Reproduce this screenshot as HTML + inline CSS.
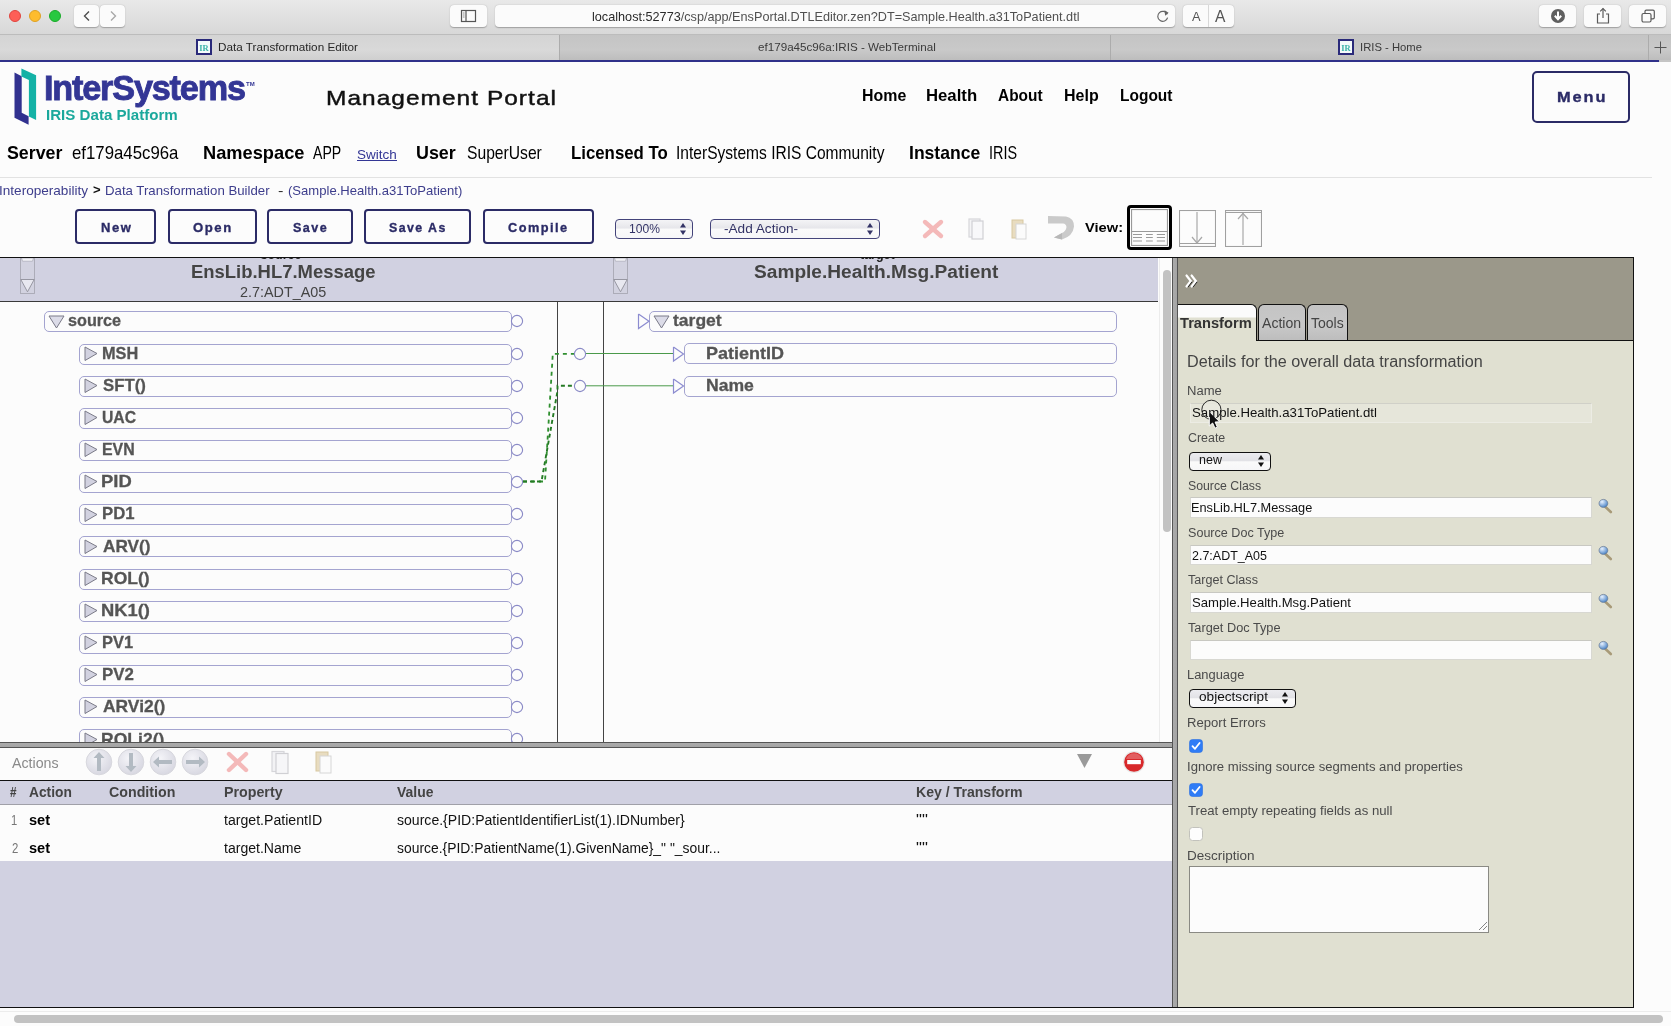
<!DOCTYPE html>
<html><head><meta charset="utf-8"><title>Data Transformation Editor</title>
<style>
html,body{margin:0;padding:0;width:1671px;height:1026px;overflow:hidden;background:#fcfcfc;font-family:'Liberation Sans',sans-serif}
</style></head><body>
<div style="position:relative;width:1671px;height:1026px;overflow:hidden;will-change:transform">
<div style="position:absolute;left:0px;top:0px;width:1671px;height:34px;background:linear-gradient(#e9e9e9,#d8d8d8)"></div>
<div style="position:absolute;left:0px;top:34px;width:1671px;height:1px;background:#bcbcbc"></div>
<div style="position:absolute;left:9px;top:10px;width:12px;height:12px;border-radius:50%;background:#fe5f57;box-sizing:border-box;border:0.5px solid #e0443e"></div>
<div style="position:absolute;left:29px;top:10px;width:12px;height:12px;border-radius:50%;background:#febc2e;box-sizing:border-box;border:0.5px solid #dea123"></div>
<div style="position:absolute;left:49px;top:10px;width:12px;height:12px;border-radius:50%;background:#28c840;box-sizing:border-box;border:0.5px solid #1aab29"></div>
<div style="position:absolute;left:74px;top:5px;width:25px;height:22px;background:#fbfbfb;border-radius:4px;box-shadow:0 0.5px 1.2px rgba(0,0,0,0.28)"></div>
<div style="position:absolute;left:100px;top:5px;width:25px;height:22px;background:#fbfbfb;border-radius:4px;box-shadow:0 0.5px 1.2px rgba(0,0,0,0.28)"></div>
<svg style="position:absolute;left:82px;top:10px;" width="10" height="12" viewBox="0 0 10 12"><polyline points="7,1.5 2.5,6 7,10.5" fill="none" stroke="#4d4d4d" stroke-width="1.4"/></svg>
<svg style="position:absolute;left:108px;top:10px;" width="10" height="12" viewBox="0 0 10 12"><polyline points="3,1.5 7.5,6 3,10.5" fill="none" stroke="#a8a8a8" stroke-width="1.4"/></svg>
<div style="position:absolute;left:450px;top:5px;width:37px;height:22px;background:#fbfbfb;border-radius:4px;box-shadow:0 0.5px 1.2px rgba(0,0,0,0.28)"></div>
<svg style="position:absolute;left:460px;top:9px;" width="18" height="14" viewBox="0 0 18 14"><rect x="1.5" y="1.5" width="14" height="11" fill="none" stroke="#555" stroke-width="1.2"/><line x1="6" y1="1.5" x2="6" y2="12.5" stroke="#555" stroke-width="1.2"/><line x1="2.8" y1="4" x2="4.6" y2="4" stroke="#777" stroke-width="0.8"/><line x1="2.8" y1="6" x2="4.6" y2="6" stroke="#777" stroke-width="0.8"/><line x1="2.8" y1="8" x2="4.6" y2="8" stroke="#777" stroke-width="0.8"/></svg>
<div style="position:absolute;left:495px;top:5px;width:680px;height:22px;background:#fbfbfb;border-radius:4px;box-shadow:0 0.5px 1.2px rgba(0,0,0,0.28)"></div>
<svg style="position:absolute;left:1156px;top:9px;" width="14" height="14" viewBox="0 0 14 14"><path d="M11.3,5.2 A5,5 0 1 0 11.6,8.6" fill="none" stroke="#666" stroke-width="1.2"/><polygon points="8.5,1.2 12.6,3.8 9.2,6.8" fill="#666"/></svg>
<div style="position:absolute;left:1183px;top:5px;width:51px;height:22px;background:#fbfbfb;border-radius:4px;box-shadow:0 0.5px 1.2px rgba(0,0,0,0.28)"></div>
<div style="position:absolute;left:1208px;top:5px;width:1px;height:22px;background:#d8d8d8"></div>
<div style="position:absolute;left:1539px;top:5px;width:37px;height:22px;background:#fbfbfb;border-radius:4px;box-shadow:0 0.5px 1.2px rgba(0,0,0,0.28)"></div>
<div style="position:absolute;left:1584px;top:5px;width:37px;height:22px;background:#fbfbfb;border-radius:4px;box-shadow:0 0.5px 1.2px rgba(0,0,0,0.28)"></div>
<div style="position:absolute;left:1629px;top:5px;width:37px;height:22px;background:#fbfbfb;border-radius:4px;box-shadow:0 0.5px 1.2px rgba(0,0,0,0.28)"></div>
<svg style="position:absolute;left:1550px;top:8px;" width="16" height="16" viewBox="0 0 16 16"><circle cx="8" cy="8" r="7" fill="#5f5f5f"/><line x1="8" y1="3.6" x2="8" y2="10" stroke="#fff" stroke-width="2"/><polyline points="4.8,7.8 8,11.2 11.2,7.8" fill="none" stroke="#fff" stroke-width="2"/></svg>
<svg style="position:absolute;left:1595px;top:7px;" width="16" height="18" viewBox="0 0 16 18"><polyline points="5,7 2.5,7 2.5,16 13.5,16 13.5,7 11,7" fill="none" stroke="#5a5a5a" stroke-width="1.2"/><line x1="8" y1="1.5" x2="8" y2="11" stroke="#5a5a5a" stroke-width="1.2"/><polyline points="5.2,4.3 8,1.5 10.8,4.3" fill="none" stroke="#5a5a5a" stroke-width="1.2"/></svg>
<svg style="position:absolute;left:1640px;top:9px;" width="16" height="14" viewBox="0 0 16 14"><rect x="2" y="4.5" width="9" height="8.5" rx="1.5" fill="none" stroke="#5a5a5a" stroke-width="1.2"/><path d="M5,4.5 V2.5 Q5,1.2 6.3,1.2 H13 Q14.3,1.2 14.3,2.5 V8.5 Q14.3,9.8 13,9.8 H11" fill="none" stroke="#5a5a5a" stroke-width="1.2"/></svg>
<div style="position:absolute;left:0px;top:35px;width:1671px;height:25px;background:linear-gradient(#c4c4c4,#c9c9c9 60%,#bdbdbd)"></div>
<div style="position:absolute;left:0px;top:35px;width:559px;height:25px;background:linear-gradient(#d4d4d4,#d9d9d9 60%,#cfcfcf)"></div>
<div style="position:absolute;left:559px;top:35px;width:1px;height:25px;background:#acacac"></div>
<div style="position:absolute;left:1110px;top:35px;width:1px;height:25px;background:#acacac"></div>
<div style="position:absolute;left:1648px;top:35px;width:1px;height:25px;background:#acacac"></div>
<svg style="position:absolute;left:1654px;top:41px;" width="13" height="13" viewBox="0 0 13 13"><line x1="6.5" y1="0.5" x2="6.5" y2="12.5" stroke="#555" stroke-width="1"/><line x1="0.5" y1="6.5" x2="12.5" y2="6.5" stroke="#555" stroke-width="1"/></svg>
<svg style="position:absolute;left:196px;top:39px;" width="16" height="16" viewBox="0 0 16 16"><rect x="1" y="1" width="14" height="14" fill="#f4fbfb" stroke="#2a2a7a" stroke-width="2"/><text x="8" y="11.6" font-family="Liberation Serif" font-size="8.5" font-weight="bold" fill="#3bb3a8" text-anchor="middle">IR</text></svg>
<svg style="position:absolute;left:1338px;top:39px;" width="16" height="16" viewBox="0 0 16 16"><rect x="1" y="1" width="14" height="14" fill="#f4fbfb" stroke="#2a2a7a" stroke-width="2"/><text x="8" y="11.6" font-family="Liberation Serif" font-size="8.5" font-weight="bold" fill="#3bb3a8" text-anchor="middle">IR</text></svg>
<div style="position:absolute;left:0px;top:60px;width:1659px;height:2px;background:#30318a"></div>
<div style="position:absolute;left:1659px;top:60px;width:12px;height:2px;background:#c4c4c4"></div>
<div style="position:absolute;left:0px;top:62px;width:1671px;height:964px;background:#fcfcfc"></div>
<svg style="position:absolute;left:10px;top:64px;" width="32" height="64" viewBox="0 0 32 64"><polygon points="4.5,8.4 11.7,12.2 11.7,48.7 18.6,52.2 18.6,60.8 4.5,53.7" fill="#31318f"/><polygon points="11.4,4.4 26.1,11.2 26.1,55.9 18.9,52.6 18.9,15.9 11.4,12.4" fill="#14b2a6"/></svg>
<div style="position:absolute;left:246px;top:81px;font-family:'Liberation Sans';font-size:6px;font-weight:bold;color:#333695;line-height:6px">TM</div>
<div style="position:absolute;left:1532px;top:71px;width:98px;height:52px;box-sizing:border-box;border:2px solid #2b2b66;border-radius:5px"></div>
<div style="position:absolute;left:0px;top:177px;width:1652px;height:1px;background:#e2e2e2"></div>
<div style="position:absolute;left:357px;top:160px;width:39.5px;height:1px;background:#333695"></div>
<div style="position:absolute;left:75px;top:209.3px;width:81px;height:35px;box-sizing:border-box;border:2px solid #2b2b66;border-radius:4px;background:#fcfcfc"></div>
<div style="position:absolute;left:168px;top:209.3px;width:89px;height:35px;box-sizing:border-box;border:2px solid #2b2b66;border-radius:4px;background:#fcfcfc"></div>
<div style="position:absolute;left:267px;top:209.3px;width:86px;height:35px;box-sizing:border-box;border:2px solid #2b2b66;border-radius:4px;background:#fcfcfc"></div>
<div style="position:absolute;left:364px;top:209.3px;width:107px;height:35px;box-sizing:border-box;border:2px solid #2b2b66;border-radius:4px;background:#fcfcfc"></div>
<div style="position:absolute;left:483px;top:209.3px;width:111px;height:35px;box-sizing:border-box;border:2px solid #2b2b66;border-radius:4px;background:#fcfcfc"></div>
<div style="position:absolute;left:615px;top:219px;width:78px;height:20px;box-sizing:border-box;border:1px solid #44447a;border-radius:4px;background:linear-gradient(#f4f4f6,#e6e6ea 45%,#fafafa 50%,#f6f6f8)"></div>
<div style="position:absolute;left:710px;top:219px;width:170px;height:20px;box-sizing:border-box;border:1px solid #44447a;border-radius:4px;background:linear-gradient(#f4f4f6,#e6e6ea 45%,#fafafa 50%,#f6f6f8)"></div>
<svg style="position:absolute;left:678.5px;top:222px;" width="8" height="14" viewBox="0 0 8 14"><polygon points="4,1 7,5.5 1,5.5" fill="#333366"/><polygon points="4,13 7,8.5 1,8.5" fill="#333366"/></svg>
<svg style="position:absolute;left:865.5px;top:222px;" width="8" height="14" viewBox="0 0 8 14"><polygon points="4,1 7,5.5 1,5.5" fill="#333366"/><polygon points="4,13 7,8.5 1,8.5" fill="#333366"/></svg>
<svg style="position:absolute;left:921px;top:218px;" width="24" height="22" viewBox="0 0 24 22"><line x1="4" y1="4" x2="20" y2="18" stroke="#f4b9b9" stroke-width="4.4" stroke-linecap="round"/><line x1="20" y1="4" x2="4" y2="18" stroke="#f4b9b9" stroke-width="4.4" stroke-linecap="round"/></svg>
<svg style="position:absolute;left:966px;top:217px;" width="20" height="24" viewBox="0 0 20 24"><rect x="3" y="2" width="11" height="18" fill="#f4f4f6" stroke="#d6d6da" stroke-width="1.2"/><rect x="6" y="4" width="11" height="18" fill="#f8f8fa" stroke="#d0d0d4" stroke-width="1.2"/></svg>
<svg style="position:absolute;left:1010px;top:217px;" width="20" height="24" viewBox="0 0 20 24"><rect x="2" y="3" width="11" height="18" fill="#e8dcc0" stroke="#d8c8a0" stroke-width="1"/><rect x="6" y="7" width="10" height="15" fill="#fbfbfb" stroke="#d6d6d6" stroke-width="1"/></svg>
<svg style="position:absolute;left:1040px;top:210px;" width="40" height="35" viewBox="0 0 40 35"><path d="M8,6 L26,6.5 Q34,8 34,16.5 Q33,26 22,29.5 L14,27.5 L22,23 Q26,21 26.5,17 Q26,13.5 23,13.5 L8,13.5 Z" fill="#cacaca"/><path d="M14,27.5 L22,23 L22,29.5 Z" fill="#b8b8b8"/></svg>
<div style="position:absolute;left:1127px;top:205px;width:45px;height:45px;box-sizing:border-box;border:3px solid #000;border-radius:4px;background:#fcfcfc"></div>
<svg style="position:absolute;left:1131px;top:209px;" width="37" height="37" viewBox="0 0 37 37"><rect x="0.5" y="0.5" width="36" height="36" fill="none" stroke="#999" stroke-width="1.2"/><line x1="0.5" y1="22.5" x2="36.5" y2="22.5" stroke="#999" stroke-width="1.2"/><line x1="2" y1="25.5" x2="11" y2="25.5" stroke="#999" stroke-width="1"/><line x1="15" y1="25.5" x2="21.8" y2="25.5" stroke="#999" stroke-width="1"/><line x1="25.8" y1="25.5" x2="34" y2="25.5" stroke="#999" stroke-width="1"/><line x1="2" y1="28.5" x2="11" y2="28.5" stroke="#999" stroke-width="1"/><line x1="15" y1="28.5" x2="21.8" y2="28.5" stroke="#999" stroke-width="1"/><line x1="25.8" y1="28.5" x2="34" y2="28.5" stroke="#999" stroke-width="1"/><line x1="2" y1="32" x2="11" y2="32" stroke="#999" stroke-width="1"/><line x1="15" y1="32" x2="21.8" y2="32" stroke="#999" stroke-width="1"/><line x1="25.8" y1="32" x2="34" y2="32" stroke="#999" stroke-width="1"/></svg>
<svg style="position:absolute;left:1179px;top:210px;" width="37" height="37" viewBox="0 0 37 37"><rect x="0.5" y="0.5" width="36" height="36" fill="none" stroke="#a0a0a0" stroke-width="1.1"/><line x1="0.5" y1="33.5" x2="36.5" y2="33.5" stroke="#a0a0a0" stroke-width="1.1"/><line x1="18" y1="2" x2="18" y2="33" stroke="#a8a8a8" stroke-width="1.2"/><polyline points="13,27 18,33 23,27" fill="none" stroke="#a8a8a8" stroke-width="1.2"/></svg>
<svg style="position:absolute;left:1225px;top:210px;" width="37" height="37" viewBox="0 0 37 37"><rect x="0.5" y="0.5" width="36" height="36" fill="none" stroke="#a0a0a0" stroke-width="1.1"/><line x1="0.5" y1="2.5" x2="36.5" y2="2.5" stroke="#a0a0a0" stroke-width="1.1"/><line x1="18" y1="3" x2="18" y2="35" stroke="#a8a8a8" stroke-width="1.2"/><polyline points="13,9 18,3.5 23,9" fill="none" stroke="#a8a8a8" stroke-width="1.2"/></svg>
<div style="position:absolute;left:0px;top:257px;width:1634px;height:1px;background:#111"></div>
<div style="position:absolute;left:0px;top:258px;width:1158px;height:43px;background:#d1d1e1"></div>
<div style="position:absolute;left:0px;top:301px;width:1158px;height:1px;background:#3a3a3a"></div>
<div style="position:absolute;left:0px;top:302px;width:1172px;height:440px;background:#fcfcfc"></div>
<div style="position:absolute;left:1158px;top:258px;width:14px;height:44px;background:#fcfcfc"></div>
<div style="position:absolute;left:1159px;top:258px;width:1px;height:484px;background:#ececec"></div>
<div style="position:absolute;left:1163px;top:270px;width:8px;height:262px;background:#c2c2c2;border-radius:4px"></div>
<svg style="position:absolute;left:20px;top:258px;" width="15" height="36" viewBox="0 0 15 36"><rect x="0.5" y="0.5" width="14" height="35" fill="#d2d2e0" stroke="#a8a8b4" stroke-width="0.9"/><path d="M1.5,0 H13.5 L12.5,3.2 H2.5 Z" fill="#f2f2f6" stroke="#a8a8b4" stroke-width="0.7"/><polygon points="0.8,21.5 14.2,21.5 7.5,33.8" fill="#e8e8f0" stroke="#8e8e9a" stroke-width="0.9"/></svg>
<svg style="position:absolute;left:613px;top:258px;" width="15" height="36" viewBox="0 0 15 36"><rect x="0.5" y="0.5" width="14" height="35" fill="#d2d2e0" stroke="#a8a8b4" stroke-width="0.9"/><path d="M1.5,0 H13.5 L12.5,3.2 H2.5 Z" fill="#f2f2f6" stroke="#a8a8b4" stroke-width="0.7"/><polygon points="0.8,21.5 14.2,21.5 7.5,33.8" fill="#e8e8f0" stroke="#8e8e9a" stroke-width="0.9"/></svg>
<div style="position:absolute;left:557px;top:302px;width:1px;height:440px;background:#444"></div>
<div style="position:absolute;left:603px;top:302px;width:1px;height:440px;background:#444"></div>
<div style="position:absolute;left:44px;top:311px;width:468px;height:21px;box-sizing:border-box;border:1.2px solid #a4a4d0;border-radius:5px;background:#fcfcfc"></div>
<svg style="position:absolute;left:47.5px;top:314.5px;" width="17" height="14" viewBox="0 0 17 14"><polygon points="1,1 16,1 8.5,13" fill="#dcdce8" stroke="#7a7a88" stroke-width="1"/></svg>
<svg style="position:absolute;left:510px;top:314.3px;" width="14" height="14" viewBox="0 0 14 14"><circle cx="7" cy="7" r="5.6" fill="#fcfcfc" stroke="#8a8ac6" stroke-width="1.15"/></svg>
<div style="position:absolute;left:78.5px;top:343.5px;width:433.5px;height:21px;box-sizing:border-box;border:1.2px solid #a4a4d0;border-radius:5px;background:#fcfcfc"></div>
<svg style="position:absolute;left:83.5px;top:345.8px;" width="14" height="16" viewBox="0 0 14 16"><polygon points="1,1 13,7.5 1,14.5" fill="#d2d2e0" stroke="#7a7a88" stroke-width="1"/></svg>
<svg style="position:absolute;left:510px;top:346.5px;" width="14" height="14" viewBox="0 0 14 14"><circle cx="7" cy="7" r="5.6" fill="#fcfcfc" stroke="#8a8ac6" stroke-width="1.15"/></svg>
<div style="position:absolute;left:78.5px;top:375.5px;width:433.5px;height:21px;box-sizing:border-box;border:1.2px solid #a4a4d0;border-radius:5px;background:#fcfcfc"></div>
<svg style="position:absolute;left:83.5px;top:377.95px;" width="14" height="16" viewBox="0 0 14 16"><polygon points="1,1 13,7.5 1,14.5" fill="#d2d2e0" stroke="#7a7a88" stroke-width="1"/></svg>
<svg style="position:absolute;left:510px;top:378.65px;" width="14" height="14" viewBox="0 0 14 14"><circle cx="7" cy="7" r="5.6" fill="#fcfcfc" stroke="#8a8ac6" stroke-width="1.15"/></svg>
<div style="position:absolute;left:78.5px;top:407.5px;width:433.5px;height:21px;box-sizing:border-box;border:1.2px solid #a4a4d0;border-radius:5px;background:#fcfcfc"></div>
<svg style="position:absolute;left:83.5px;top:410.1px;" width="14" height="16" viewBox="0 0 14 16"><polygon points="1,1 13,7.5 1,14.5" fill="#d2d2e0" stroke="#7a7a88" stroke-width="1"/></svg>
<svg style="position:absolute;left:510px;top:410.8px;" width="14" height="14" viewBox="0 0 14 14"><circle cx="7" cy="7" r="5.6" fill="#fcfcfc" stroke="#8a8ac6" stroke-width="1.15"/></svg>
<div style="position:absolute;left:78.5px;top:440.0px;width:433.5px;height:21px;box-sizing:border-box;border:1.2px solid #a4a4d0;border-radius:5px;background:#fcfcfc"></div>
<svg style="position:absolute;left:83.5px;top:442.25px;" width="14" height="16" viewBox="0 0 14 16"><polygon points="1,1 13,7.5 1,14.5" fill="#d2d2e0" stroke="#7a7a88" stroke-width="1"/></svg>
<svg style="position:absolute;left:510px;top:442.95px;" width="14" height="14" viewBox="0 0 14 14"><circle cx="7" cy="7" r="5.6" fill="#fcfcfc" stroke="#8a8ac6" stroke-width="1.15"/></svg>
<div style="position:absolute;left:78.5px;top:472.0px;width:433.5px;height:21px;box-sizing:border-box;border:1.2px solid #a4a4d0;border-radius:5px;background:#fcfcfc"></div>
<svg style="position:absolute;left:83.5px;top:474.4px;" width="14" height="16" viewBox="0 0 14 16"><polygon points="1,1 13,7.5 1,14.5" fill="#d2d2e0" stroke="#7a7a88" stroke-width="1"/></svg>
<svg style="position:absolute;left:510px;top:475.09999999999997px;" width="14" height="14" viewBox="0 0 14 14"><circle cx="7" cy="7" r="5.6" fill="#fcfcfc" stroke="#8a8ac6" stroke-width="1.15"/></svg>
<div style="position:absolute;left:78.5px;top:504.0px;width:433.5px;height:21px;box-sizing:border-box;border:1.2px solid #a4a4d0;border-radius:5px;background:#fcfcfc"></div>
<svg style="position:absolute;left:83.5px;top:506.55px;" width="14" height="16" viewBox="0 0 14 16"><polygon points="1,1 13,7.5 1,14.5" fill="#d2d2e0" stroke="#7a7a88" stroke-width="1"/></svg>
<svg style="position:absolute;left:510px;top:507.25px;" width="14" height="14" viewBox="0 0 14 14"><circle cx="7" cy="7" r="5.6" fill="#fcfcfc" stroke="#8a8ac6" stroke-width="1.15"/></svg>
<div style="position:absolute;left:78.5px;top:536.0px;width:433.5px;height:21px;box-sizing:border-box;border:1.2px solid #a4a4d0;border-radius:5px;background:#fcfcfc"></div>
<svg style="position:absolute;left:83.5px;top:538.7px;" width="14" height="16" viewBox="0 0 14 16"><polygon points="1,1 13,7.5 1,14.5" fill="#d2d2e0" stroke="#7a7a88" stroke-width="1"/></svg>
<svg style="position:absolute;left:510px;top:539.4000000000001px;" width="14" height="14" viewBox="0 0 14 14"><circle cx="7" cy="7" r="5.6" fill="#fcfcfc" stroke="#8a8ac6" stroke-width="1.15"/></svg>
<div style="position:absolute;left:78.5px;top:568.5px;width:433.5px;height:21px;box-sizing:border-box;border:1.2px solid #a4a4d0;border-radius:5px;background:#fcfcfc"></div>
<svg style="position:absolute;left:83.5px;top:570.85px;" width="14" height="16" viewBox="0 0 14 16"><polygon points="1,1 13,7.5 1,14.5" fill="#d2d2e0" stroke="#7a7a88" stroke-width="1"/></svg>
<svg style="position:absolute;left:510px;top:571.5500000000001px;" width="14" height="14" viewBox="0 0 14 14"><circle cx="7" cy="7" r="5.6" fill="#fcfcfc" stroke="#8a8ac6" stroke-width="1.15"/></svg>
<div style="position:absolute;left:78.5px;top:600.5px;width:433.5px;height:21px;box-sizing:border-box;border:1.2px solid #a4a4d0;border-radius:5px;background:#fcfcfc"></div>
<svg style="position:absolute;left:83.5px;top:603.0px;" width="14" height="16" viewBox="0 0 14 16"><polygon points="1,1 13,7.5 1,14.5" fill="#d2d2e0" stroke="#7a7a88" stroke-width="1"/></svg>
<svg style="position:absolute;left:510px;top:603.7px;" width="14" height="14" viewBox="0 0 14 14"><circle cx="7" cy="7" r="5.6" fill="#fcfcfc" stroke="#8a8ac6" stroke-width="1.15"/></svg>
<div style="position:absolute;left:78.5px;top:632.5px;width:433.5px;height:21px;box-sizing:border-box;border:1.2px solid #a4a4d0;border-radius:5px;background:#fcfcfc"></div>
<svg style="position:absolute;left:83.5px;top:635.15px;" width="14" height="16" viewBox="0 0 14 16"><polygon points="1,1 13,7.5 1,14.5" fill="#d2d2e0" stroke="#7a7a88" stroke-width="1"/></svg>
<svg style="position:absolute;left:510px;top:635.85px;" width="14" height="14" viewBox="0 0 14 14"><circle cx="7" cy="7" r="5.6" fill="#fcfcfc" stroke="#8a8ac6" stroke-width="1.15"/></svg>
<div style="position:absolute;left:78.5px;top:665.0px;width:433.5px;height:21px;box-sizing:border-box;border:1.2px solid #a4a4d0;border-radius:5px;background:#fcfcfc"></div>
<svg style="position:absolute;left:83.5px;top:667.3px;" width="14" height="16" viewBox="0 0 14 16"><polygon points="1,1 13,7.5 1,14.5" fill="#d2d2e0" stroke="#7a7a88" stroke-width="1"/></svg>
<svg style="position:absolute;left:510px;top:668.0px;" width="14" height="14" viewBox="0 0 14 14"><circle cx="7" cy="7" r="5.6" fill="#fcfcfc" stroke="#8a8ac6" stroke-width="1.15"/></svg>
<div style="position:absolute;left:78.5px;top:697.0px;width:433.5px;height:21px;box-sizing:border-box;border:1.2px solid #a4a4d0;border-radius:5px;background:#fcfcfc"></div>
<svg style="position:absolute;left:83.5px;top:699.45px;" width="14" height="16" viewBox="0 0 14 16"><polygon points="1,1 13,7.5 1,14.5" fill="#d2d2e0" stroke="#7a7a88" stroke-width="1"/></svg>
<svg style="position:absolute;left:510px;top:700.1500000000001px;" width="14" height="14" viewBox="0 0 14 14"><circle cx="7" cy="7" r="5.6" fill="#fcfcfc" stroke="#8a8ac6" stroke-width="1.15"/></svg>
<div style="position:absolute;left:78.5px;top:729.0px;width:433.5px;height:21px;box-sizing:border-box;border:1.2px solid #a4a4d0;border-radius:5px;background:#fcfcfc"></div>
<svg style="position:absolute;left:83.5px;top:731.5999999999999px;" width="14" height="16" viewBox="0 0 14 16"><polygon points="1,1 13,7.5 1,14.5" fill="#d2d2e0" stroke="#7a7a88" stroke-width="1"/></svg>
<svg style="position:absolute;left:510px;top:732.3px;" width="14" height="14" viewBox="0 0 14 14"><circle cx="7" cy="7" r="5.6" fill="#fcfcfc" stroke="#8a8ac6" stroke-width="1.15"/></svg>
<div style="position:absolute;left:649px;top:311px;width:468px;height:21px;box-sizing:border-box;border:1.2px solid #a4a4d0;border-radius:5px;background:#fcfcfc"></div>
<svg style="position:absolute;left:652.5px;top:314.5px;" width="17" height="14" viewBox="0 0 17 14"><polygon points="1,1 16,1 8.5,13" fill="#dcdce8" stroke="#7a7a88" stroke-width="1"/></svg>
<svg style="position:absolute;left:637px;top:313px;" width="14" height="17" viewBox="0 0 14 17"><polyline points="1.5,1 12,8.2 1.5,15.5 1.5,1" fill="none" stroke="#8c8cd0" stroke-width="1.2"/></svg>
<div style="position:absolute;left:683.5px;top:343.3px;width:433.5px;height:21px;box-sizing:border-box;border:1.2px solid #a4a4d0;border-radius:5px;background:#fcfcfc"></div>
<svg style="position:absolute;left:671.5px;top:345.8px;" width="14" height="17" viewBox="0 0 14 17"><polyline points="1.5,1 11.5,8 1.5,15 1.5,1" fill="none" stroke="#8c8cd0" stroke-width="1.2"/></svg>
<div style="position:absolute;left:683.5px;top:375.5px;width:433.5px;height:21px;box-sizing:border-box;border:1.2px solid #a4a4d0;border-radius:5px;background:#fcfcfc"></div>
<svg style="position:absolute;left:671.5px;top:378.0px;" width="14" height="17" viewBox="0 0 14 17"><polyline points="1.5,1 11.5,8 1.5,15 1.5,1" fill="none" stroke="#8c8cd0" stroke-width="1.2"/></svg>
<svg style="position:absolute;left:0px;top:0px;pointer-events:none" width="700" height="500" viewBox="0 0 700 500"><line x1="586" y1="353.5" x2="673" y2="353.5" stroke="#4a9a4a" stroke-width="1"/><line x1="586" y1="385.8" x2="673" y2="385.8" stroke="#4a9a4a" stroke-width="1"/><polyline points="523,481.5 545,481.5 552.8,353.8 575,353.8" fill="none" stroke="#2f8f2f" stroke-width="1.8" stroke-dasharray="4,4"/><polyline points="523,481.5 541.5,481.5 557.5,391 557.5,385.8 575,385.8" fill="none" stroke="#247a24" stroke-width="1.9" stroke-dasharray="4,3"/></svg>
<svg style="position:absolute;left:573px;top:346.5px;" width="14" height="14" viewBox="0 0 14 14"><circle cx="7" cy="7" r="5.6" fill="#fcfcfc" stroke="#8a8ac6" stroke-width="1.15"/></svg>
<svg style="position:absolute;left:573px;top:378.8px;" width="14" height="14" viewBox="0 0 14 14"><circle cx="7" cy="7" r="5.6" fill="#fcfcfc" stroke="#8a8ac6" stroke-width="1.15"/></svg>
<div style="position:absolute;left:0px;top:742px;width:1172px;height:6px;background:linear-gradient(#555 0,#555 1px,#ababab 1px,#a4a4a4 5px,#555 5px)"></div>
<div style="position:absolute;left:0px;top:748px;width:1172px;height:32px;background:#fcfcfc"></div>
<div style="position:absolute;left:0px;top:780px;width:1172px;height:1px;background:#111"></div>
<div style="position:absolute;left:0px;top:781px;width:1172px;height:23px;background:#d1d1e1"></div>
<div style="position:absolute;left:0px;top:804px;width:1172px;height:1px;background:#a0a0a8"></div>
<div style="position:absolute;left:0px;top:805px;width:1172px;height:56px;background:#fcfcfc"></div>
<div style="position:absolute;left:0px;top:861px;width:1172px;height:146px;background:#d1d1e1"></div>
<div style="position:absolute;left:0px;top:1007px;width:1634px;height:1px;background:#111"></div>
<svg style="position:absolute;left:85px;top:748px;" width="28" height="28" viewBox="0 0 28 28"><defs><radialGradient id="g" cx="40%" cy="35%" r="70%"><stop offset="0" stop-color="#f4f4f8"/><stop offset="1" stop-color="#d6d6e0"/></radialGradient></defs><circle cx="14" cy="14" r="12.8" fill="url(#g)" stroke="#d8d8de" stroke-width="1"/><polygon points="14,4 19.5,10 16,10 16,23 12,23 12,10 8.5,10" fill="#b2bac2"/></svg>
<svg style="position:absolute;left:116.5px;top:748px;" width="28" height="28" viewBox="0 0 28 28"><defs><radialGradient id="g" cx="40%" cy="35%" r="70%"><stop offset="0" stop-color="#f4f4f8"/><stop offset="1" stop-color="#d6d6e0"/></radialGradient></defs><circle cx="14" cy="14" r="12.8" fill="url(#g)" stroke="#d8d8de" stroke-width="1"/><polygon points="14,24 19.5,18 16,18 16,5 12,5 12,18 8.5,18" fill="#b2bac2"/></svg>
<svg style="position:absolute;left:148.5px;top:748px;" width="28" height="28" viewBox="0 0 28 28"><defs><radialGradient id="g" cx="40%" cy="35%" r="70%"><stop offset="0" stop-color="#f4f4f8"/><stop offset="1" stop-color="#d6d6e0"/></radialGradient></defs><circle cx="14" cy="14" r="12.8" fill="url(#g)" stroke="#d8d8de" stroke-width="1"/><polygon points="4,14 10,8.5 10,12 23,12 23,16 10,16 10,19.5" fill="#b2bac2"/></svg>
<svg style="position:absolute;left:180.5px;top:748px;" width="28" height="28" viewBox="0 0 28 28"><defs><radialGradient id="g" cx="40%" cy="35%" r="70%"><stop offset="0" stop-color="#f4f4f8"/><stop offset="1" stop-color="#d6d6e0"/></radialGradient></defs><circle cx="14" cy="14" r="12.8" fill="url(#g)" stroke="#d8d8de" stroke-width="1"/><polygon points="24,14 18,8.5 18,12 5,12 5,16 18,16 18,19.5" fill="#b2bac2"/></svg>
<svg style="position:absolute;left:225px;top:750px;" width="25" height="24" viewBox="0 0 25 24"><line x1="4" y1="4" x2="21" y2="20" stroke="#f4b9b9" stroke-width="4.4" stroke-linecap="round"/><line x1="21" y1="4" x2="4" y2="20" stroke="#f4b9b9" stroke-width="4.4" stroke-linecap="round"/></svg>
<svg style="position:absolute;left:270px;top:750px;" width="22" height="25" viewBox="0 0 22 25"><rect x="2" y="1.5" width="12" height="20" fill="#f2f2f4" stroke="#d6d6da" stroke-width="1.2"/><rect x="6" y="3.5" width="12" height="20" fill="#f6f6f8" stroke="#d0d0d4" stroke-width="1.2"/></svg>
<svg style="position:absolute;left:314px;top:750px;" width="21" height="25" viewBox="0 0 21 25"><rect x="2" y="2" width="12" height="19" fill="#e8dcc0" stroke="#d8c8a0" stroke-width="1"/><rect x="6" y="6" width="11" height="17" fill="#fbfbfb" stroke="#d6d6d6" stroke-width="1"/></svg>
<svg style="position:absolute;left:1076px;top:753px;" width="17" height="16" viewBox="0 0 17 16"><polygon points="1,1 16,1 8.5,15" fill="#9a9a9a"/></svg>
<svg style="position:absolute;left:1122px;top:750px;" width="24" height="24" viewBox="0 0 24 24"><circle cx="12" cy="12" r="11" fill="#e8e8e8"/><circle cx="12" cy="12" r="9.8" fill="#d8292b"/><rect x="5.2" y="10" width="13.6" height="4.2" fill="#fff"/><path d="M4,9 A8.5,8.5 0 0 1 20,9" fill="rgba(255,255,255,0.25)"/></svg>
<div style="position:absolute;left:1172px;top:258px;width:6px;height:749px;background:linear-gradient(90deg,#555 0,#555 1px,#ababab 1px,#a4a4a4 5px,#555 5px)"></div>
<div style="position:absolute;left:1178px;top:258px;width:455px;height:82px;background:#9b988a"></div>
<div style="position:absolute;left:1178px;top:340px;width:455px;height:667px;background:#e0e0d1"></div>
<div style="position:absolute;left:1633px;top:257px;width:1px;height:751px;background:#111"></div>
<svg style="position:absolute;left:1184px;top:273px;" width="16" height="17" viewBox="0 0 16 17"><polyline points="7.8,8.6 3.6,13.8" fill="none" stroke="#000" stroke-width="1.6"/><polyline points="12.8,8.6 8.6,13.8" fill="none" stroke="#000" stroke-width="1.6"/><polyline points="2.5,2.5 6.8,8 2.5,13.5" fill="none" stroke="#fff" stroke-width="2.2" stroke-linecap="round"/><polyline points="7.6,2.5 11.9,8 7.6,13.5" fill="none" stroke="#fff" stroke-width="2.2" stroke-linecap="round"/></svg>
<div style="position:absolute;left:1178px;top:340px;width:455px;height:1px;background:#111"></div>
<div style="position:absolute;left:1178px;top:304px;width:79px;height:37px;box-sizing:border-box;border:1px solid #111;border-left:none;border-bottom:none;border-top-right-radius:6px;background:linear-gradient(#fbfbfb 0,#fbfbfb 12px,#e0e0d1 13px)"></div>
<div style="position:absolute;left:1257.5px;top:304px;width:48.5px;height:36px;box-sizing:border-box;border:1px solid #111;border-bottom:none;border-radius:6px 6px 0 0;background:linear-gradient(#c4c4c4,#c8c8c8 60%,#bdbdbd)"></div>
<div style="position:absolute;left:1307px;top:304px;width:41px;height:36px;box-sizing:border-box;border:1px solid #111;border-bottom:none;border-radius:6px 6px 0 0;background:linear-gradient(#c4c4c4,#c8c8c8 60%,#bdbdbd)"></div>
<div style="position:absolute;left:1189.5px;top:403px;width:402px;height:19.5px;box-sizing:border-box;border:1px solid #ececE4;border-top-color:#d0d0c8;background:#e6e6da"></div>
<div style="position:absolute;left:1189.5px;top:497px;width:402px;height:20.5px;box-sizing:border-box;border:1px solid #d8d8d2;border-top-color:#c8c8c2;background:#fcfcfc"></div>
<div style="position:absolute;left:1189.5px;top:544.5px;width:402px;height:20.5px;box-sizing:border-box;border:1px solid #d8d8d2;border-top-color:#c8c8c2;background:#fcfcfc"></div>
<div style="position:absolute;left:1189.5px;top:592px;width:402px;height:20.5px;box-sizing:border-box;border:1px solid #d8d8d2;border-top-color:#c8c8c2;background:#fcfcfc"></div>
<div style="position:absolute;left:1189.5px;top:639.5px;width:402px;height:20.5px;box-sizing:border-box;border:1px solid #d8d8d2;border-top-color:#c8c8c2;background:#fcfcfc"></div>
<svg style="position:absolute;left:1597px;top:497.5px;" width="17" height="17" viewBox="0 0 17 17"><defs><radialGradient id="mg" cx="35%" cy="30%" r="70%"><stop offset="0" stop-color="#e8f2ff"/><stop offset="1" stop-color="#4e86c8"/></radialGradient></defs><line x1="8.5" y1="9" x2="13.8" y2="14" stroke="#a89a78" stroke-width="2.6" stroke-linecap="round"/><ellipse cx="6.4" cy="5.4" rx="4.4" ry="4" fill="url(#mg)" stroke="#6a7a90" stroke-width="0.7"/></svg>
<svg style="position:absolute;left:1597px;top:545.0px;" width="17" height="17" viewBox="0 0 17 17"><defs><radialGradient id="mg" cx="35%" cy="30%" r="70%"><stop offset="0" stop-color="#e8f2ff"/><stop offset="1" stop-color="#4e86c8"/></radialGradient></defs><line x1="8.5" y1="9" x2="13.8" y2="14" stroke="#a89a78" stroke-width="2.6" stroke-linecap="round"/><ellipse cx="6.4" cy="5.4" rx="4.4" ry="4" fill="url(#mg)" stroke="#6a7a90" stroke-width="0.7"/></svg>
<svg style="position:absolute;left:1597px;top:592.5px;" width="17" height="17" viewBox="0 0 17 17"><defs><radialGradient id="mg" cx="35%" cy="30%" r="70%"><stop offset="0" stop-color="#e8f2ff"/><stop offset="1" stop-color="#4e86c8"/></radialGradient></defs><line x1="8.5" y1="9" x2="13.8" y2="14" stroke="#a89a78" stroke-width="2.6" stroke-linecap="round"/><ellipse cx="6.4" cy="5.4" rx="4.4" ry="4" fill="url(#mg)" stroke="#6a7a90" stroke-width="0.7"/></svg>
<svg style="position:absolute;left:1597px;top:640.0px;" width="17" height="17" viewBox="0 0 17 17"><defs><radialGradient id="mg" cx="35%" cy="30%" r="70%"><stop offset="0" stop-color="#e8f2ff"/><stop offset="1" stop-color="#4e86c8"/></radialGradient></defs><line x1="8.5" y1="9" x2="13.8" y2="14" stroke="#a89a78" stroke-width="2.6" stroke-linecap="round"/><ellipse cx="6.4" cy="5.4" rx="4.4" ry="4" fill="url(#mg)" stroke="#6a7a90" stroke-width="0.7"/></svg>
<div style="position:absolute;left:1189px;top:451.5px;width:82px;height:19.5px;box-sizing:border-box;border:1.2px solid #111;border-radius:4px;background:linear-gradient(#ececf0,#e2e2e6 45%,#fafafa 52%,#f6f6f8)"></div>
<svg style="position:absolute;left:1256.5px;top:454px;" width="8" height="14" viewBox="0 0 8 14"><polygon points="4,1 7,5.5 1,5.5" fill="#111"/><polygon points="4,13 7,8.5 1,8.5" fill="#111"/></svg>
<div style="position:absolute;left:1189px;top:688.5px;width:107px;height:19.5px;box-sizing:border-box;border:1.2px solid #111;border-radius:4px;background:linear-gradient(#ececf0,#e2e2e6 45%,#fafafa 52%,#f6f6f8)"></div>
<svg style="position:absolute;left:1281px;top:691px;" width="8" height="14" viewBox="0 0 8 14"><polygon points="4,1 7,5.5 1,5.5" fill="#111"/><polygon points="4,13 7,8.5 1,8.5" fill="#111"/></svg>
<svg style="position:absolute;left:1189px;top:739px;" width="14" height="14" viewBox="0 0 14 14"><rect x="0.5" y="0.5" width="13" height="13" rx="3" fill="#2f7cf6" stroke="#2a6fe0" stroke-width="0.6"/><polyline points="3.5,7.2 6,9.8 10.6,4" fill="none" stroke="#fff" stroke-width="1.8" stroke-linecap="round" stroke-linejoin="round"/></svg>
<svg style="position:absolute;left:1189px;top:783px;" width="14" height="14" viewBox="0 0 14 14"><rect x="0.5" y="0.5" width="13" height="13" rx="3" fill="#2f7cf6" stroke="#2a6fe0" stroke-width="0.6"/><polyline points="3.5,7.2 6,9.8 10.6,4" fill="none" stroke="#fff" stroke-width="1.8" stroke-linecap="round" stroke-linejoin="round"/></svg>
<svg style="position:absolute;left:1189px;top:827px;" width="14" height="14" viewBox="0 0 14 14"><rect x="0.5" y="0.5" width="13" height="13" rx="3" fill="#fdfdfd" stroke="#c2c2bc" stroke-width="1"/></svg>
<div style="position:absolute;left:1189px;top:866px;width:300px;height:67px;box-sizing:border-box;border:1px solid #8a8a84;background:#fcfcfc"></div>
<svg style="position:absolute;left:1478px;top:921px;" width="10" height="10" viewBox="0 0 10 10"><line x1="1" y1="9" x2="9" y2="1" stroke="#777" stroke-width="0.9"/><line x1="5" y1="9" x2="9" y2="5" stroke="#777" stroke-width="0.9"/></svg>
<svg style="position:absolute;left:1196px;top:396px;" width="32" height="34" viewBox="0 0 32 34"><circle cx="15.4" cy="13.8" r="9.6" fill="rgba(232,232,222,0.8)" stroke="#2a2a2a" stroke-width="1"/><path d="M13.3,15.5 L13.3,30 L16.6,27 L19,32.2 L21.4,31.2 L19.1,26 L23.6,25.8 Z" fill="#111" stroke="#fff" stroke-width="1"/></svg>
<div style="position:absolute;left:0px;top:1011px;width:1671px;height:1px;background:#ececec"></div>
<div style="position:absolute;left:14px;top:1015px;width:1649px;height:8px;background:#c2c2c2;border-radius:4px"></div>
<div style="position:absolute;left:255px;top:258px;width:60px;height:5px;overflow:hidden"><div style="position:absolute;left:5.5px;top:-9px;font-family:'Liberation Sans';font-weight:bold;font-size:12.5px;line-height:12.5px;color:#222;white-space:nowrap">source</div></div>
<div style="position:absolute;left:850px;top:258px;width:60px;height:5px;overflow:hidden"><div style="position:absolute;left:10px;top:-9px;font-family:'Liberation Sans';font-weight:bold;font-size:12.5px;line-height:12.5px;color:#222;white-space:nowrap">target</div></div>
<div style="position:absolute;left:592.40px;top:10.20px;font-family:'Liberation Sans';font-size:13px;line-height:13px;font-weight:normal;color:#505050;white-space:nowrap;transform:scaleX(0.9741);transform-origin:0 0;letter-spacing:0px;"><span style="color:#2a2a2a">localhost:52773</span>/csp/app/EnsPortal.DTLEditor.zen?DT=Sample.Health.a31ToPatient.dtl</div>
<div style="position:absolute;left:218.40px;top:42.30px;font-family:'Liberation Sans';font-size:11.8px;line-height:11.8px;font-weight:normal;color:#262626;white-space:nowrap;transform:scaleX(0.9932);transform-origin:0 0;letter-spacing:0px;">Data Transformation Editor</div>
<div style="position:absolute;left:758.40px;top:41.80px;font-family:'Liberation Sans';font-size:11.8px;line-height:11.8px;font-weight:normal;color:#3a3a3a;white-space:nowrap;transform:scaleX(0.9867);transform-origin:0 0;letter-spacing:0px;">ef179a45c96a:IRIS - WebTerminal</div>
<div style="position:absolute;left:1359.65px;top:42.00px;font-family:'Liberation Sans';font-size:11.8px;line-height:11.8px;font-weight:normal;color:#3a3a3a;white-space:nowrap;transform:scaleX(0.9544);transform-origin:0 0;letter-spacing:0px;">IRIS - Home</div>
<div style="position:absolute;left:1192.00px;top:10.00px;font-family:'Liberation Sans';font-size:13px;line-height:13px;font-weight:normal;color:#555;white-space:nowrap;transform:scaleX(0.9889);transform-origin:0 0;letter-spacing:0px;">A</div>
<div style="position:absolute;left:1215.00px;top:7.80px;font-family:'Liberation Sans';font-size:17px;line-height:17px;font-weight:normal;color:#555;white-space:nowrap;transform:scaleX(0.9167);transform-origin:0 0;letter-spacing:0px;">A</div>
<div style="position:absolute;left:43.55px;top:70.00px;font-family:'Liberation Sans';font-size:35px;line-height:35px;font-weight:bold;color:#333695;white-space:nowrap;transform:scaleX(0.9772);transform-origin:0 0;letter-spacing:-1.2px;-webkit-text-stroke:0.9px #333695">InterSystems</div>
<div style="position:absolute;left:45.50px;top:108.50px;font-family:'Liberation Sans';font-size:13.8px;line-height:13.8px;font-weight:bold;color:#1aa89c;white-space:nowrap;transform:scaleX(1.0949);transform-origin:0 0;letter-spacing:0px;">IRIS Data Platform</div>
<div style="position:absolute;left:325.84px;top:87.00px;font-family:'Liberation Sans';font-size:21px;line-height:21px;font-weight:normal;color:#111;white-space:nowrap;transform:scaleX(1.1633);transform-origin:0 0;letter-spacing:0.9px;-webkit-text-stroke:0.45px #111">Management Portal</div>
<div style="position:absolute;left:861.64px;top:87.00px;font-family:'Liberation Sans';font-size:16.5px;line-height:16.5px;font-weight:bold;color:#000;white-space:nowrap;transform:scaleX(0.9649);transform-origin:0 0;letter-spacing:0px;">Home</div>
<div style="position:absolute;left:925.99px;top:87.00px;font-family:'Liberation Sans';font-size:16.5px;line-height:16.5px;font-weight:bold;color:#000;white-space:nowrap;transform:scaleX(1.0132);transform-origin:0 0;letter-spacing:0px;">Health</div>
<div style="position:absolute;left:998.00px;top:87.00px;font-family:'Liberation Sans';font-size:16.5px;line-height:16.5px;font-weight:bold;color:#000;white-space:nowrap;transform:scaleX(0.9345);transform-origin:0 0;letter-spacing:0px;">About</div>
<div style="position:absolute;left:1064.03px;top:87.00px;font-family:'Liberation Sans';font-size:16.5px;line-height:16.5px;font-weight:bold;color:#000;white-space:nowrap;transform:scaleX(0.9690);transform-origin:0 0;letter-spacing:0px;">Help</div>
<div style="position:absolute;left:1120.06px;top:87.00px;font-family:'Liberation Sans';font-size:16.5px;line-height:16.5px;font-weight:bold;color:#000;white-space:nowrap;transform:scaleX(0.9387);transform-origin:0 0;letter-spacing:0px;">Logout</div>
<div style="position:absolute;left:1556.94px;top:88.50px;font-family:'Liberation Sans';font-size:15.5px;line-height:15.5px;font-weight:bold;color:#2b2b66;white-space:nowrap;transform:scaleX(1.0586);transform-origin:0 0;letter-spacing:1.8px;-webkit-text-stroke:0.35px #2b2b66">Menu</div>
<div style="position:absolute;left:6.80px;top:144.00px;font-family:'Liberation Sans';font-size:18.5px;line-height:18.5px;font-weight:bold;color:#000;white-space:nowrap;transform:scaleX(0.9616);transform-origin:0 0;letter-spacing:0px;">Server</div>
<div style="position:absolute;left:71.50px;top:144.00px;font-family:'Liberation Sans';font-size:18.5px;line-height:18.5px;font-weight:normal;color:#000;white-space:nowrap;transform:scaleX(0.9077);transform-origin:0 0;letter-spacing:0px;">ef179a45c96a</div>
<div style="position:absolute;left:202.81px;top:144.00px;font-family:'Liberation Sans';font-size:18.5px;line-height:18.5px;font-weight:bold;color:#000;white-space:nowrap;transform:scaleX(0.9867);transform-origin:0 0;letter-spacing:0px;">Namespace</div>
<div style="position:absolute;left:313.30px;top:144.00px;font-family:'Liberation Sans';font-size:18.5px;line-height:18.5px;font-weight:normal;color:#000;white-space:nowrap;transform:scaleX(0.7607);transform-origin:0 0;letter-spacing:0px;">APP</div>
<div style="position:absolute;left:416.23px;top:144.00px;font-family:'Liberation Sans';font-size:18.5px;line-height:18.5px;font-weight:bold;color:#000;white-space:nowrap;transform:scaleX(0.9665);transform-origin:0 0;letter-spacing:0px;">User</div>
<div style="position:absolute;left:466.50px;top:144.00px;font-family:'Liberation Sans';font-size:18.5px;line-height:18.5px;font-weight:normal;color:#000;white-space:nowrap;transform:scaleX(0.8463);transform-origin:0 0;letter-spacing:0px;">SuperUser</div>
<div style="position:absolute;left:570.79px;top:144.00px;font-family:'Liberation Sans';font-size:18.5px;line-height:18.5px;font-weight:bold;color:#000;white-space:nowrap;transform:scaleX(0.9082);transform-origin:0 0;letter-spacing:0px;">Licensed To</div>
<div style="position:absolute;left:675.66px;top:144.00px;font-family:'Liberation Sans';font-size:18.5px;line-height:18.5px;font-weight:normal;color:#000;white-space:nowrap;transform:scaleX(0.8412);transform-origin:0 0;letter-spacing:0px;">InterSystems IRIS Community</div>
<div style="position:absolute;left:909.35px;top:144.00px;font-family:'Liberation Sans';font-size:18.5px;line-height:18.5px;font-weight:bold;color:#000;white-space:nowrap;transform:scaleX(0.9489);transform-origin:0 0;letter-spacing:0px;">Instance</div>
<div style="position:absolute;left:989.02px;top:144.00px;font-family:'Liberation Sans';font-size:18.5px;line-height:18.5px;font-weight:normal;color:#000;white-space:nowrap;transform:scaleX(0.7794);transform-origin:0 0;letter-spacing:0px;">IRIS</div>
<div style="position:absolute;left:357.00px;top:147.80px;font-family:'Liberation Sans';font-size:13.5px;line-height:13.5px;font-weight:normal;color:#333695;white-space:nowrap;transform:scaleX(0.9986);transform-origin:0 0;letter-spacing:0px;">Switch</div>
<div style="position:absolute;left:-0.54px;top:183.50px;font-family:'Liberation Sans';font-size:13px;line-height:13px;font-weight:normal;color:#3d3d8c;white-space:nowrap;transform:scaleX(1.0440);transform-origin:0 0;letter-spacing:0px;">Interoperability</div>
<div style="position:absolute;left:93.00px;top:182.50px;font-family:'Liberation Sans';font-size:13px;line-height:13px;font-weight:bold;color:#111;white-space:nowrap;transform:scaleX(1.0000);transform-origin:0 0;letter-spacing:0px;">&gt;</div>
<div style="position:absolute;left:105.48px;top:183.50px;font-family:'Liberation Sans';font-size:13px;line-height:13px;font-weight:normal;color:#3d3d8c;white-space:nowrap;transform:scaleX(1.0169);transform-origin:0 0;letter-spacing:0px;">Data Transformation Builder</div>
<div style="position:absolute;left:278.00px;top:183.50px;font-family:'Liberation Sans';font-size:13px;line-height:13px;font-weight:normal;color:#222;white-space:nowrap;transform:scaleX(1.2500);transform-origin:0 0;letter-spacing:0px;">-</div>
<div style="position:absolute;left:288.00px;top:183.50px;font-family:'Liberation Sans';font-size:13px;line-height:13px;font-weight:normal;color:#3d3d8c;white-space:nowrap;transform:scaleX(1.0052);transform-origin:0 0;letter-spacing:0px;">(Sample.Health.a31ToPatient)</div>
<div style="position:absolute;left:100.50px;top:221.30px;font-family:'Liberation Sans';font-size:13.6px;line-height:13.6px;font-weight:bold;color:#2b2b66;white-space:nowrap;transform:scaleX(0.9564);transform-origin:0 0;letter-spacing:1.6px;-webkit-text-stroke:0.35px #2b2b66">New</div>
<div style="position:absolute;left:192.70px;top:221.30px;font-family:'Liberation Sans';font-size:13.6px;line-height:13.6px;font-weight:bold;color:#2b2b66;white-space:nowrap;transform:scaleX(0.9659);transform-origin:0 0;letter-spacing:1.6px;-webkit-text-stroke:0.35px #2b2b66">Open</div>
<div style="position:absolute;left:292.60px;top:221.30px;font-family:'Liberation Sans';font-size:13.6px;line-height:13.6px;font-weight:bold;color:#2b2b66;white-space:nowrap;transform:scaleX(0.9219);transform-origin:0 0;letter-spacing:1.6px;-webkit-text-stroke:0.35px #2b2b66">Save</div>
<div style="position:absolute;left:388.70px;top:221.30px;font-family:'Liberation Sans';font-size:13.6px;line-height:13.6px;font-weight:bold;color:#2b2b66;white-space:nowrap;transform:scaleX(0.9089);transform-origin:0 0;letter-spacing:1.6px;-webkit-text-stroke:0.35px #2b2b66">Save As</div>
<div style="position:absolute;left:507.70px;top:221.30px;font-family:'Liberation Sans';font-size:13.6px;line-height:13.6px;font-weight:bold;color:#2b2b66;white-space:nowrap;transform:scaleX(0.9362);transform-origin:0 0;letter-spacing:1.6px;-webkit-text-stroke:0.35px #2b2b66">Compile</div>
<div style="position:absolute;left:628.70px;top:222.00px;font-family:'Liberation Sans';font-size:13px;line-height:13px;font-weight:normal;color:#333366;white-space:nowrap;transform:scaleX(0.9291);transform-origin:0 0;letter-spacing:0px;">100%</div>
<div style="position:absolute;left:723.90px;top:222.00px;font-family:'Liberation Sans';font-size:13px;line-height:13px;font-weight:normal;color:#333366;white-space:nowrap;transform:scaleX(1.0463);transform-origin:0 0;letter-spacing:0px;">-Add Action-</div>
<div style="position:absolute;left:1084.50px;top:221.30px;font-family:'Liberation Sans';font-size:13.5px;line-height:13.5px;font-weight:bold;color:#000;white-space:nowrap;transform:scaleX(1.0863);transform-origin:0 0;letter-spacing:0px;">View:</div>
<div style="position:absolute;left:191.02px;top:263.00px;font-family:'Liberation Sans';font-size:18.8px;line-height:18.8px;font-weight:bold;color:#444;white-space:nowrap;transform:scaleX(0.9816);transform-origin:0 0;letter-spacing:0px;">EnsLib.HL7.Message</div>
<div style="position:absolute;left:240.00px;top:283.70px;font-family:'Liberation Sans';font-size:15px;line-height:15px;font-weight:normal;color:#444;white-space:nowrap;transform:scaleX(0.9587);transform-origin:0 0;letter-spacing:0px;">2.7:ADT_A05</div>
<div style="position:absolute;left:754.40px;top:263.30px;font-family:'Liberation Sans';font-size:18.8px;line-height:18.8px;font-weight:bold;color:#444;white-space:nowrap;transform:scaleX(1.0179);transform-origin:0 0;letter-spacing:0px;">Sample.Health.Msg.Patient</div>
<div style="position:absolute;left:67.60px;top:311.80px;font-family:'Liberation Sans';font-size:17px;line-height:17px;font-weight:bold;color:#555;white-space:nowrap;transform:scaleX(0.9531);transform-origin:0 0;letter-spacing:0px;-webkit-text-stroke:0.3px #555">source</div>
<div style="position:absolute;left:101.54px;top:344.70px;font-family:'Liberation Sans';font-size:17px;line-height:17px;font-weight:bold;color:#555;white-space:nowrap;transform:scaleX(0.9589);transform-origin:0 0;letter-spacing:0px;-webkit-text-stroke:0.3px #555">MSH</div>
<div style="position:absolute;left:102.50px;top:376.85px;font-family:'Liberation Sans';font-size:17px;line-height:17px;font-weight:bold;color:#555;white-space:nowrap;transform:scaleX(0.9867);transform-origin:0 0;letter-spacing:0px;-webkit-text-stroke:0.3px #555">SFT()</div>
<div style="position:absolute;left:101.57px;top:409.00px;font-family:'Liberation Sans';font-size:17px;line-height:17px;font-weight:bold;color:#555;white-space:nowrap;transform:scaleX(0.9254);transform-origin:0 0;letter-spacing:0px;-webkit-text-stroke:0.3px #555">UAC</div>
<div style="position:absolute;left:101.56px;top:441.15px;font-family:'Liberation Sans';font-size:17px;line-height:17px;font-weight:bold;color:#555;white-space:nowrap;transform:scaleX(0.9353);transform-origin:0 0;letter-spacing:0px;-webkit-text-stroke:0.3px #555">EVN</div>
<div style="position:absolute;left:101.42px;top:473.30px;font-family:'Liberation Sans';font-size:17px;line-height:17px;font-weight:bold;color:#555;white-space:nowrap;transform:scaleX(1.0827);transform-origin:0 0;letter-spacing:0px;-webkit-text-stroke:0.3px #555">PID</div>
<div style="position:absolute;left:101.52px;top:505.45px;font-family:'Liberation Sans';font-size:17px;line-height:17px;font-weight:bold;color:#555;white-space:nowrap;transform:scaleX(0.9837);transform-origin:0 0;letter-spacing:0px;-webkit-text-stroke:0.3px #555">PD1</div>
<div style="position:absolute;left:102.50px;top:537.60px;font-family:'Liberation Sans';font-size:17px;line-height:17px;font-weight:bold;color:#555;white-space:nowrap;transform:scaleX(1.0141);transform-origin:0 0;letter-spacing:0px;-webkit-text-stroke:0.3px #555">ARV()</div>
<div style="position:absolute;left:101.47px;top:569.75px;font-family:'Liberation Sans';font-size:17px;line-height:17px;font-weight:bold;color:#555;white-space:nowrap;transform:scaleX(1.0297);transform-origin:0 0;letter-spacing:0px;-webkit-text-stroke:0.3px #555">ROL()</div>
<div style="position:absolute;left:101.42px;top:601.90px;font-family:'Liberation Sans';font-size:17px;line-height:17px;font-weight:bold;color:#555;white-space:nowrap;transform:scaleX(1.0808);transform-origin:0 0;letter-spacing:0px;-webkit-text-stroke:0.3px #555">NK1()</div>
<div style="position:absolute;left:101.54px;top:634.05px;font-family:'Liberation Sans';font-size:17px;line-height:17px;font-weight:bold;color:#555;white-space:nowrap;transform:scaleX(0.9649);transform-origin:0 0;letter-spacing:0px;-webkit-text-stroke:0.3px #555">PV1</div>
<div style="position:absolute;left:101.51px;top:666.20px;font-family:'Liberation Sans';font-size:17px;line-height:17px;font-weight:bold;color:#555;white-space:nowrap;transform:scaleX(0.9909);transform-origin:0 0;letter-spacing:0px;-webkit-text-stroke:0.3px #555">PV2</div>
<div style="position:absolute;left:102.50px;top:698.35px;font-family:'Liberation Sans';font-size:17px;line-height:17px;font-weight:bold;color:#555;white-space:nowrap;transform:scaleX(1.0247);transform-origin:0 0;letter-spacing:0px;-webkit-text-stroke:0.3px #555">ARVi2()</div>
<div style="position:absolute;left:101.47px;top:730.50px;font-family:'Liberation Sans';font-size:17px;line-height:17px;font-weight:bold;color:#555;white-space:nowrap;transform:scaleX(1.0314);transform-origin:0 0;letter-spacing:0px;-webkit-text-stroke:0.3px #555;clip-path:inset(0 0 5px 0)">ROLi2()</div>
<div style="position:absolute;left:672.70px;top:311.80px;font-family:'Liberation Sans';font-size:17px;line-height:17px;font-weight:bold;color:#555;white-space:nowrap;transform:scaleX(1.0301);transform-origin:0 0;letter-spacing:0px;-webkit-text-stroke:0.3px #555">target</div>
<div style="position:absolute;left:706.14px;top:345.40px;font-family:'Liberation Sans';font-size:17px;line-height:17px;font-weight:bold;color:#555;white-space:nowrap;transform:scaleX(1.0580);transform-origin:0 0;letter-spacing:0px;-webkit-text-stroke:0.3px #555">PatientID</div>
<div style="position:absolute;left:706.17px;top:377.40px;font-family:'Liberation Sans';font-size:17px;line-height:17px;font-weight:bold;color:#555;white-space:nowrap;transform:scaleX(1.0346);transform-origin:0 0;letter-spacing:0px;-webkit-text-stroke:0.3px #555">Name</div>
<div style="position:absolute;left:11.50px;top:755.00px;font-family:'Liberation Sans';font-size:15px;line-height:15px;font-weight:normal;color:#8a8a8a;white-space:nowrap;transform:scaleX(0.9468);transform-origin:0 0;letter-spacing:0px;">Actions</div>
<div style="position:absolute;left:10.00px;top:785.20px;font-family:'Liberation Sans';font-size:14px;line-height:14px;font-weight:bold;color:#444;white-space:nowrap;transform:scaleX(0.8375);transform-origin:0 0;letter-spacing:0px;">#</div>
<div style="position:absolute;left:29.30px;top:785.20px;font-family:'Liberation Sans';font-size:14px;line-height:14px;font-weight:bold;color:#444;white-space:nowrap;transform:scaleX(0.9837);transform-origin:0 0;letter-spacing:0px;">Action</div>
<div style="position:absolute;left:108.50px;top:785.20px;font-family:'Liberation Sans';font-size:14px;line-height:14px;font-weight:bold;color:#444;white-space:nowrap;transform:scaleX(1.0161);transform-origin:0 0;letter-spacing:0px;">Condition</div>
<div style="position:absolute;left:224.00px;top:785.20px;font-family:'Liberation Sans';font-size:14px;line-height:14px;font-weight:bold;color:#444;white-space:nowrap;transform:scaleX(1.0175);transform-origin:0 0;letter-spacing:0px;">Property</div>
<div style="position:absolute;left:396.80px;top:785.20px;font-family:'Liberation Sans';font-size:14px;line-height:14px;font-weight:bold;color:#444;white-space:nowrap;transform:scaleX(0.9948);transform-origin:0 0;letter-spacing:0px;">Value</div>
<div style="position:absolute;left:916.40px;top:785.20px;font-family:'Liberation Sans';font-size:14px;line-height:14px;font-weight:bold;color:#444;white-space:nowrap;transform:scaleX(1.0060);transform-origin:0 0;letter-spacing:0px;">Key / Transform</div>
<div style="position:absolute;left:11.20px;top:812.60px;font-family:'Liberation Sans';font-size:14px;line-height:14px;font-weight:normal;color:#777;white-space:nowrap;transform:scaleX(0.8000);transform-origin:0 0;letter-spacing:0px;">1</div>
<div style="position:absolute;left:29.30px;top:812.60px;font-family:'Liberation Sans';font-size:14px;line-height:14px;font-weight:bold;color:#000;white-space:nowrap;transform:scaleX(1.0402);transform-origin:0 0;letter-spacing:0px;">set</div>
<div style="position:absolute;left:224.00px;top:812.60px;font-family:'Liberation Sans';font-size:14px;line-height:14px;font-weight:normal;color:#111;white-space:nowrap;transform:scaleX(1.0086);transform-origin:0 0;letter-spacing:0px;">target.PatientID</div>
<div style="position:absolute;left:396.80px;top:812.60px;font-family:'Liberation Sans';font-size:14px;line-height:14px;font-weight:normal;color:#111;white-space:nowrap;transform:scaleX(1.0046);transform-origin:0 0;letter-spacing:0px;">source.{PID:PatientIdentifierList(1).IDNumber}</div>
<div style="position:absolute;left:916.40px;top:811.60px;font-family:'Liberation Sans';font-size:14px;line-height:14px;font-weight:normal;color:#111;white-space:nowrap;transform:scaleX(1.1936);transform-origin:0 0;letter-spacing:0px;">""</div>
<div style="position:absolute;left:11.50px;top:840.70px;font-family:'Liberation Sans';font-size:14px;line-height:14px;font-weight:normal;color:#777;white-space:nowrap;transform:scaleX(0.8125);transform-origin:0 0;letter-spacing:0px;">2</div>
<div style="position:absolute;left:29.30px;top:840.70px;font-family:'Liberation Sans';font-size:14px;line-height:14px;font-weight:bold;color:#000;white-space:nowrap;transform:scaleX(1.0402);transform-origin:0 0;letter-spacing:0px;">set</div>
<div style="position:absolute;left:224.00px;top:840.70px;font-family:'Liberation Sans';font-size:14px;line-height:14px;font-weight:normal;color:#111;white-space:nowrap;transform:scaleX(1.0046);transform-origin:0 0;letter-spacing:0px;">target.Name</div>
<div style="position:absolute;left:396.80px;top:840.70px;font-family:'Liberation Sans';font-size:14px;line-height:14px;font-weight:normal;color:#111;white-space:nowrap;transform:scaleX(0.9924);transform-origin:0 0;letter-spacing:0px;">source.{PID:PatientName(1).GivenName}_" "_sour...</div>
<div style="position:absolute;left:916.40px;top:839.70px;font-family:'Liberation Sans';font-size:14px;line-height:14px;font-weight:normal;color:#111;white-space:nowrap;transform:scaleX(1.1936);transform-origin:0 0;letter-spacing:0px;">""</div>
<div style="position:absolute;left:1179.60px;top:315.60px;font-family:'Liberation Sans';font-size:14.5px;line-height:14.5px;font-weight:bold;color:#333;white-space:nowrap;transform:scaleX(1.0112);transform-origin:0 0;letter-spacing:0px;">Transform</div>
<div style="position:absolute;left:1261.60px;top:315.60px;font-family:'Liberation Sans';font-size:14.5px;line-height:14.5px;font-weight:normal;color:#444;white-space:nowrap;transform:scaleX(0.9718);transform-origin:0 0;letter-spacing:0px;">Action</div>
<div style="position:absolute;left:1311.00px;top:315.60px;font-family:'Liberation Sans';font-size:14.5px;line-height:14.5px;font-weight:normal;color:#444;white-space:nowrap;transform:scaleX(0.9673);transform-origin:0 0;letter-spacing:0px;">Tools</div>
<div style="position:absolute;left:1186.99px;top:354.40px;font-family:'Liberation Sans';font-size:16px;line-height:16px;font-weight:normal;color:#444;white-space:nowrap;transform:scaleX(1.0104);transform-origin:0 0;letter-spacing:0px;">Details for the overall data transformation</div>
<div style="position:absolute;left:1187.16px;top:384.70px;font-family:'Liberation Sans';font-size:12.5px;line-height:12.5px;font-weight:normal;color:#4a4a4a;white-space:nowrap;transform:scaleX(1.0435);transform-origin:0 0;letter-spacing:0px;">Name</div>
<div style="position:absolute;left:1188.20px;top:431.60px;font-family:'Liberation Sans';font-size:12.5px;line-height:12.5px;font-weight:normal;color:#4a4a4a;white-space:nowrap;transform:scaleX(0.9929);transform-origin:0 0;letter-spacing:0px;">Create</div>
<div style="position:absolute;left:1188.20px;top:479.60px;font-family:'Liberation Sans';font-size:12.5px;line-height:12.5px;font-weight:normal;color:#4a4a4a;white-space:nowrap;transform:scaleX(0.9827);transform-origin:0 0;letter-spacing:0px;">Source Class</div>
<div style="position:absolute;left:1188.20px;top:526.90px;font-family:'Liberation Sans';font-size:12.5px;line-height:12.5px;font-weight:normal;color:#4a4a4a;white-space:nowrap;transform:scaleX(1.0060);transform-origin:0 0;letter-spacing:0px;">Source Doc Type</div>
<div style="position:absolute;left:1188.20px;top:574.00px;font-family:'Liberation Sans';font-size:12.5px;line-height:12.5px;font-weight:normal;color:#4a4a4a;white-space:nowrap;transform:scaleX(1.0069);transform-origin:0 0;letter-spacing:0px;">Target Class</div>
<div style="position:absolute;left:1188.20px;top:622.00px;font-family:'Liberation Sans';font-size:12.5px;line-height:12.5px;font-weight:normal;color:#4a4a4a;white-space:nowrap;transform:scaleX(1.0191);transform-origin:0 0;letter-spacing:0px;">Target Doc Type</div>
<div style="position:absolute;left:1187.17px;top:668.50px;font-family:'Liberation Sans';font-size:12.5px;line-height:12.5px;font-weight:normal;color:#4a4a4a;white-space:nowrap;transform:scaleX(1.0318);transform-origin:0 0;letter-spacing:0px;">Language</div>
<div style="position:absolute;left:1187.15px;top:717.00px;font-family:'Liberation Sans';font-size:12.5px;line-height:12.5px;font-weight:normal;color:#4a4a4a;white-space:nowrap;transform:scaleX(1.0492);transform-origin:0 0;letter-spacing:0px;">Report Errors</div>
<div style="position:absolute;left:1187.15px;top:760.60px;font-family:'Liberation Sans';font-size:12.5px;line-height:12.5px;font-weight:normal;color:#4a4a4a;white-space:nowrap;transform:scaleX(1.0474);transform-origin:0 0;letter-spacing:0px;">Ignore missing source segments and properties</div>
<div style="position:absolute;left:1188.20px;top:805.40px;font-family:'Liberation Sans';font-size:12.5px;line-height:12.5px;font-weight:normal;color:#4a4a4a;white-space:nowrap;transform:scaleX(1.0533);transform-origin:0 0;letter-spacing:0px;">Treat empty repeating fields as null</div>
<div style="position:absolute;left:1187.12px;top:850.00px;font-family:'Liberation Sans';font-size:12.5px;line-height:12.5px;font-weight:normal;color:#4a4a4a;white-space:nowrap;transform:scaleX(1.0817);transform-origin:0 0;letter-spacing:0px;">Description</div>
<div style="position:absolute;left:1192.40px;top:406.50px;font-family:'Liberation Sans';font-size:12.2px;line-height:12.2px;font-weight:normal;color:#111;white-space:nowrap;transform:scaleX(1.0834);transform-origin:0 0;letter-spacing:0px;">Sample.Health.a31ToPatient.dtl</div>
<div style="position:absolute;left:1191.35px;top:502.00px;font-family:'Liberation Sans';font-size:12.2px;line-height:12.2px;font-weight:normal;color:#111;white-space:nowrap;transform:scaleX(1.0472);transform-origin:0 0;letter-spacing:0px;">EnsLib.HL7.Message</div>
<div style="position:absolute;left:1192.40px;top:549.60px;font-family:'Liberation Sans';font-size:12.2px;line-height:12.2px;font-weight:normal;color:#111;white-space:nowrap;transform:scaleX(1.0247);transform-origin:0 0;letter-spacing:0px;">2.7:ADT_A05</div>
<div style="position:absolute;left:1192.40px;top:597.00px;font-family:'Liberation Sans';font-size:12.2px;line-height:12.2px;font-weight:normal;color:#111;white-space:nowrap;transform:scaleX(1.0763);transform-origin:0 0;letter-spacing:0px;">Sample.Health.Msg.Patient</div>
<div style="position:absolute;left:1199.40px;top:454.40px;font-family:'Liberation Sans';font-size:12.2px;line-height:12.2px;font-weight:normal;color:#111;white-space:nowrap;transform:scaleX(1.0241);transform-origin:0 0;letter-spacing:0px;">new</div>
<div style="position:absolute;left:1199.40px;top:691.30px;font-family:'Liberation Sans';font-size:12.2px;line-height:12.2px;font-weight:normal;color:#111;white-space:nowrap;transform:scaleX(1.1180);transform-origin:0 0;letter-spacing:0px;">objectscript</div>
</div>
</body></html>
